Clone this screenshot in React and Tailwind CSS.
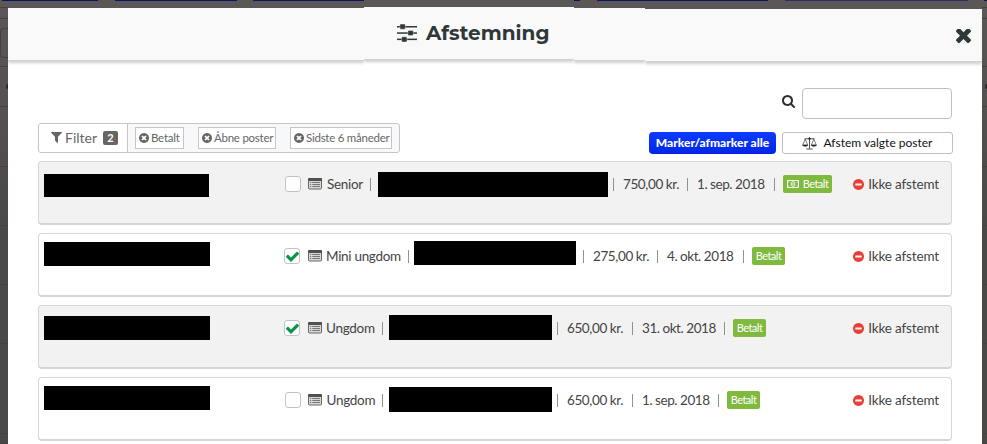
const PATHS = {
  times:
    'M1490 1322q0 40-28 68l-136 136q-28 28-68 28t-68-28l-294-294-294 294q-28 28-68 28t-68-28l-136-136q-28-28-28-68t28-68l294-294-294-294q-28-28-28-68t28-68l136-136q28-28 68-28t68 28l294 294 294-294q28-28 68-28t68 28l136 136q28 28 28 68t-28 68l-294 294 294 294q28 28 28 68z',
  search:
    'M1216 832q0-185-131.5-316.5t-316.5-131.5-316.5 131.5-131.5 316.5 131.5 316.5 316.5 131.5 316.5-131.5 131.5-316.5zm512 832q0 52-38 90t-90 38q-54 0-90-38l-343-342q-179 124-399 124-143 0-273.5-55.5t-225-150-150-225-55.5-273.5 55.5-273.5 150-225 225-150 273.5-55.5 273.5 55.5 225 150 150 225 55.5 273.5q0 220-124 399l343 343q37 37 37 90z',
  filter:
    'M1595 295q17 41-14 70l-493 493v742q0 42-39 59-13 5-25 5-27 0-45-19l-256-256q-19-19-19-45v-486l-493-493q-31-29-14-70 17-39 59-39h1280q42 0 59 39z',
  minusCircle:
    'M1344 960v-128q0-26-19-45t-45-19h-768q-26 0-45 19t-19 45v128q0 26 19 45t45 19h768q26 0 45-19t19-45zm320-64q0 209-103 385.5t-279.5 279.5-385.5 103-385.5-103-279.5-279.5-103-385.5 103-385.5 279.5-279.5 385.5-103 385.5 103 279.5 279.5 103 385.5z',
  timesCircle:
    'M1277 1122q0-26-19-45l-181-181 181-181q19-19 19-45 0-27-19-46l-90-90q-19-19-46-19-26 0-45 19l-181 181-181-181q-19-19-45-19-27 0-46 19l-90 90q-19 19-19 46 0 26 19 45l181 181-181 181q-19 19-19 45 0 27 19 46l90 90q19 19 46 19 26 0 45-19l181-181 181 181q19 19 45 19 27 0 46-19l90-90q19-19 19-46zm387-226q0 209-103 385.5t-279.5 279.5-385.5 103-385.5-103-279.5-279.5-103-385.5 103-385.5 279.5-279.5 385.5-103 385.5 103 279.5 279.5 103 385.5z',
  check:
    'M1671 566q0 40-28 68l-724 724-136 136q-28 28-68 28t-68-28l-136-136-362-362q-28-28-28-68t28-68l136-136q28-28 68-28t68 28l294 295 656-657q28-28 68-28t68 28l136 136q28 28 28 68z',
};

function Icon({ name, box = '0 0 1792 1792', className }) {
  return (
    <svg viewBox={box} fill="currentColor" className={`shrink-0 ${className}`}>
      <path d={PATHS[name]} />
    </svg>
  );
}

function SlidersIcon() {
  return (
    <svg viewBox="0 0 20 18" fill="currentColor" className="w-5 h-[18px] shrink-0">
      <rect x="0" y="2" width="20" height="1.5" />
      <rect x="0" y="8.3" width="20" height="1.5" />
      <rect x="0" y="14.6" width="20" height="1.5" />
      <g stroke="#f9f9f9" strokeWidth="0.4">
        <rect x="2.9" y="0.1" width="5.4" height="5.1" rx="1" />
        <rect x="10.9" y="6.5" width="5.4" height="5.1" rx="1" />
        <rect x="4.6" y="12.8" width="5.4" height="5.1" rx="1" />
      </g>
    </svg>
  );
}

function ListIcon({ className }) {
  return (
    <svg viewBox="0 0 14 12" className={`w-[14px] h-3 shrink-0 ${className}`}>
      <rect x="0.5" y="0.5" width="13" height="10.5" rx="1" fill="#d8d8d8" stroke="#666" />
      <rect x="0" y="0" width="14" height="3" rx="1" fill="#505050" />
      <path d="M2 4.5h1.2M2 6.5h1.2M2 8.5h1.2M4.3 4.5H12M4.3 6.5H12M4.3 8.5H12" stroke="#777" strokeWidth="1" />
    </svg>
  );
}

function BalanceIcon() {
  return (
    <svg viewBox="0 0 15 13" fill="none" stroke="#222" strokeWidth="0.8" className="w-[15px] h-[13px] shrink-0">
      <path d="M2.5 1.8h10M7.5 0.6v11M4.3 12h6.4" />
      <path d="M3.2 2.2L0.7 8h5zM11.8 2.2L9.3 8h5z" strokeWidth="0.6" />
      <path d="M0.5 8.1h5.4c-.3 1.9-5.1 1.9-5.4 0zM9.1 8.1h5.4c-.3 1.9-5.1 1.9-5.4 0z" fill="#222" strokeWidth="0.3" />
      <circle cx="7.5" cy="1.6" r="0.8" fill="#222" />
    </svg>
  );
}

function MoneyIcon() {
  return (
    <svg viewBox="0 0 12 8" fill="none" stroke="#fff" className="w-3 h-2 mr-[4px] shrink-0">
      <rect x="0.5" y="0.5" width="11" height="7" strokeWidth="0.9" />
      <ellipse cx="6" cy="4" rx="1.9" ry="2.3" strokeWidth="0.9" />
      <path d="M6 2.8v2.4M1 2.2h1.2M1 5.8h1.2M9.8 2.2H11M9.8 5.8H11" strokeWidth="0.8" />
    </svg>
  );
}

const TOP_TABS = [
  'w-[96px] ml-[2px] bg-[#0a1560]',
  'w-[122px] ml-[17px] bg-[#0a1560]',
  'w-[111px] ml-[16px] bg-[#0a1560]',
  'w-[6px] ml-[210px] bg-[#0a1560]',
  'w-[171px] ml-[17px] bg-[#0a1560]',
  'w-[183px] ml-[17px] bg-[#2a3160]',
  'w-[3px] ml-[16px] bg-[#0a1560]',
];

// heights of the page rows that show beside the dialog
const EDGE_ROWS = [
  'h-[1px]',
  'h-[11px]',
  'h-[48px]',
  'h-[40px]',
  'h-[60px]',
  'h-[59px]',
  'h-[59px]',
  'h-[59px]',
  'h-[90px]',
  'h-[10px]',
];

const FILTERS = [
  { label: 'Betalt', box: 'w-[49px]' },
  { label: 'Åbne poster', box: 'w-[78px]' },
  { label: 'Sidste 6 måneder', box: 'w-[102px]' },
];

const ROWS = [
  {
    shade: 'bg-[#f2f2f2]',
    name: 'w-[165px] h-[23px] mt-[12px] ml-[4.5px]',
    check: 'ml-[76.5px]',
    type: 'Senior',
    typeBox: 'ml-[5px] w-[43px]',
    redacted: 'w-[230px] h-[25px] mt-[10px] ml-[7px]',
    pipe: 'ml-[5px]',
    amount: '750,00 kr.',
    amountBox: 'w-[63px]',
    date: '1. sep. 2018',
    dateBox: 'w-[76px]',
    badge: 'w-[49px]',
    money: true,
  },
  {
    shade: 'bg-white',
    name: 'w-[166px] h-[24px] mt-[8px] ml-[4.5px]',
    check: 'ml-[74.5px]',
    checked: true,
    type: 'Mini ungdom',
    typeBox: 'ml-[4px] w-[82px]',
    redacted: 'w-[162px] h-[24px] mt-[7px] ml-[5px]',
    pipe: 'ml-[7px]',
    amount: '275,00 kr.',
    amountBox: 'w-[63px]',
    date: '4. okt. 2018',
    dateBox: 'w-[75px]',
    badge: 'w-[33px]',
  },
  {
    shade: 'bg-[#f2f2f2]',
    name: 'w-[166px] h-[24px] mt-[10px] ml-[5px]',
    check: 'ml-[74px]',
    checked: true,
    type: 'Ungdom',
    typeBox: 'ml-[4px] w-[56px]',
    redacted: 'w-[163px] h-[25px] mt-[9px] ml-[6px]',
    pipe: 'ml-[5px]',
    amount: '650,00 kr.',
    amountBox: 'w-[64px]',
    date: '31. okt. 2018',
    dateBox: 'w-[81px]',
    badge: 'w-[33px]',
  },
  {
    shade: 'bg-white',
    name: 'w-[166px] h-[24px] mt-[8px] ml-[5px]',
    check: 'ml-[75px]',
    type: 'Ungdom',
    typeBox: 'ml-[4.5px] w-[55.5px]',
    redacted: 'w-[163px] h-[25px] mt-[9px] ml-[6px]',
    pipe: 'ml-[5px]',
    amount: '650,00 kr.',
    amountBox: 'w-[64px]',
    date: '1. sep. 2018',
    dateBox: 'w-[75px]',
    badge: 'w-[33px]',
  },
];

function EdgeStrip({ side }) {
  return (
    <div
      className={`shrink-0 h-full bg-linear-to-b from-[#5b5757] via-[#545150] via-20% to-[#4b4848] to-50% ${
        side === 'left' ? 'w-2' : 'w-[5px]'
      }`}
    >
      {EDGE_ROWS.map((h, i) => (
        <div key={i} className={`${h} flex items-center justify-end border-b border-[#444141] overflow-hidden`}>
          {i === 2 && side === 'left' && <div className="w-[8px] h-[30px] rounded-l-[4px] border border-r-0 border-[#444141]" />}
          {i === 3 && <div className="w-[2px] h-[5px] bg-[#2b2b2b] rounded-l-full" />}
        </div>
      ))}
    </div>
  );
}

function Pipe({ className = '' }) {
  return <div className={`w-px h-[13px] mt-[16px] bg-[#909090] shrink-0 ${className}`} />;
}

function Row({ row }) {
  return (
    <div className={`flex items-start h-[64px] border border-b-2 border-[#d6d6d6] rounded-[4px] text-[13.5px] tracking-[-0.15px] leading-[20px] text-[#444] whitespace-nowrap ${row.shade}`}>
      <div className={`bg-black shrink-0 ${row.name}`} />
      <div className={`w-4 h-4 mt-[14px] shrink-0 flex items-center justify-center bg-white border border-[#c4c4c4] rounded-[3px] ${row.check}`}>
        {row.checked && <Icon name="check" className="w-[15px] h-[15px] ml-px text-[#0a9447]" />}
      </div>
      <ListIcon className={row.checked ? 'mt-[16px] ml-[8px]' : 'mt-[16px] ml-[7px]'} />
      <div className={`mt-[12px] tracking-[-0.3px] shrink-0 ${row.typeBox}`}>{row.type}</div>
      <Pipe />
      <div className={`bg-black shrink-0 ${row.redacted}`} />
      <Pipe className={row.pipe} />
      <div className={`mt-[12px] ml-[9px] tracking-[-0.4px] shrink-0 ${row.amountBox}`}>{row.amount}</div>
      <Pipe className="ml-px" />
      <div className={`mt-[12px] ml-[9px] tracking-[-0.45px] shrink-0 ${row.dateBox}`}>{row.date}</div>
      <Pipe className="ml-px" />
      <div className={`h-[18px] mt-[13px] ml-[8px] flex items-center justify-center bg-[#7fba3f] rounded-[2px] text-white text-[11px] tracking-[-0.5px] shrink-0 ${row.badge}`}>
        {row.money && <MoneyIcon />}
        Betalt
      </div>
      <div className="flex items-center ml-auto mt-[12px] mr-[12px]">
        <Icon name="minusCircle" box="128 128 1536 1536" className="w-[11px] h-[11px] mr-[4px] text-[#e84138]" />
        Ikke afstemt
      </div>
    </div>
  );
}

function HeaderPart({ width, gap, children }) {
  return (
    <div className={`shrink-0 ${width}`}>
      <div className={`bg-[#5b5757] ${gap}`} />
      <div className="h-[53px] bg-[#f9f9f9] border-b border-[#d2d2d2] shadow-[0_2px_3px_rgba(0,0,0,0.2)] [clip-path:inset(0_0_-8px_0)]">
        {children}
      </div>
    </div>
  );
}

export default function App() {
  return (
    <div className="w-[987px] h-[444px] overflow-hidden flex flex-col bg-[#5b5757] font-[Lato,'Liberation_Sans',sans-serif]">
      <div className="flex h-[7px] shrink-0">
        {TOP_TABS.map((tab, i) => (
          <div key={i} className={`h-px shrink-0 ${tab}`} />
        ))}
      </div>
      <div className="flex flex-1 min-h-0">
        <EdgeStrip side="left" />
        <div className="w-[974px] shrink-0 bg-white">
          <header className="flex items-start h-[54px] text-[#2f3739]">
            <HeaderPart width="w-[356px]" gap="h-px" />
            <HeaderPart width="w-[210px]" gap="h-0">
              <div className="flex items-center h-[51px] pl-[33px]">
                <SlidersIcon />
                <h1 className="ml-[9px] font-[Montserrat,Inter,sans-serif] text-[20px] font-bold leading-none">Afstemning</h1>
              </div>
            </HeaderPart>
            <HeaderPart width="w-[71px]" gap="h-px" />
            <HeaderPart width="w-[337px]" gap="h-[2px]">
              <div className="flex items-center justify-end h-[54px] pr-[11px]">
                <Icon name="times" box="302 434 1188 1188" className="w-[15px] h-[15px]" />
              </div>
            </HeaderPart>
          </header>

          <main className="pl-[30px] pr-[30px] pt-[27px]">
            <div className="flex justify-between h-[66px]">
              {/* Filter bar */}
              <div className="flex mt-[35px] h-[30px] w-[362px] border border-[#c4c5c7] rounded-[3px] bg-[#f7f8fa] text-[#666]">
                <div className="flex items-center w-[89px] pl-[12px] bg-white border-r border-[#c4c5c7] text-[14px] leading-[20px] pb-px rounded-l-[3px]">
                  <Icon name="filter" box="191 256 1410 1408" className="w-[11px] h-[11px] mr-[3px]" />
                  Filter
                  <span className="ml-[6px] w-[15px] h-[14px] rounded-[2px] bg-[#666] text-white text-[11px] leading-[14px] font-bold text-center">2</span>
                </div>
                <div className="flex items-center gap-[14px] pl-[7px]">
                  {FILTERS.map(f => (
                    <div key={f.label} className={`flex items-center shrink-0 pl-[3px] h-[22px] border border-[#c4c5c7] bg-white text-[11.5px] tracking-[-0.25px] whitespace-nowrap ${f.box}`}>
                      <Icon name="timesCircle" box="128 128 1536 1536" className="w-[10px] h-[10px] mr-[2px]" />
                      {f.label}
                    </div>
                  ))}
                </div>
              </div>

              {/* Search and bulk actions */}
              <div className="flex flex-col items-end">
                <div className="flex items-center">
                  <Icon name="search" box="64 128 1664 1664" className="w-[13px] h-[13px] mr-[7px] mb-[4px] text-[#2f2f2f]" />
                  <input className="w-[150px] h-[31px] border border-[#bfbfbf] rounded-[4px] bg-white" />
                </div>
                <div className="flex mt-[13px] -mr-px gap-[6px]">
                  <button className="w-[127px] h-[22px] rounded-[4px] bg-linear-to-b from-[#0d3bff] to-[#0325e6] text-white text-[12px] font-black leading-[22px] whitespace-nowrap">
                    Marker/afmarker alle
                  </button>
                  <button className="w-[171px] h-[22px] flex items-center justify-center border border-[#bfbfbf] rounded-[3px] bg-white text-[12px] text-[#111] whitespace-nowrap">
                    <BalanceIcon />
                    <span className="ml-[6px]">Afstem valgte poster</span>
                  </button>
                </div>
              </div>
            </div>

            <div className="flex flex-col gap-2 mt-[7px]">
              {ROWS.map((row, i) => (
                <Row key={i} row={row} />
              ))}
            </div>
          </main>
        </div>
        <EdgeStrip side="right" />
      </div>
    </div>
  );
}
